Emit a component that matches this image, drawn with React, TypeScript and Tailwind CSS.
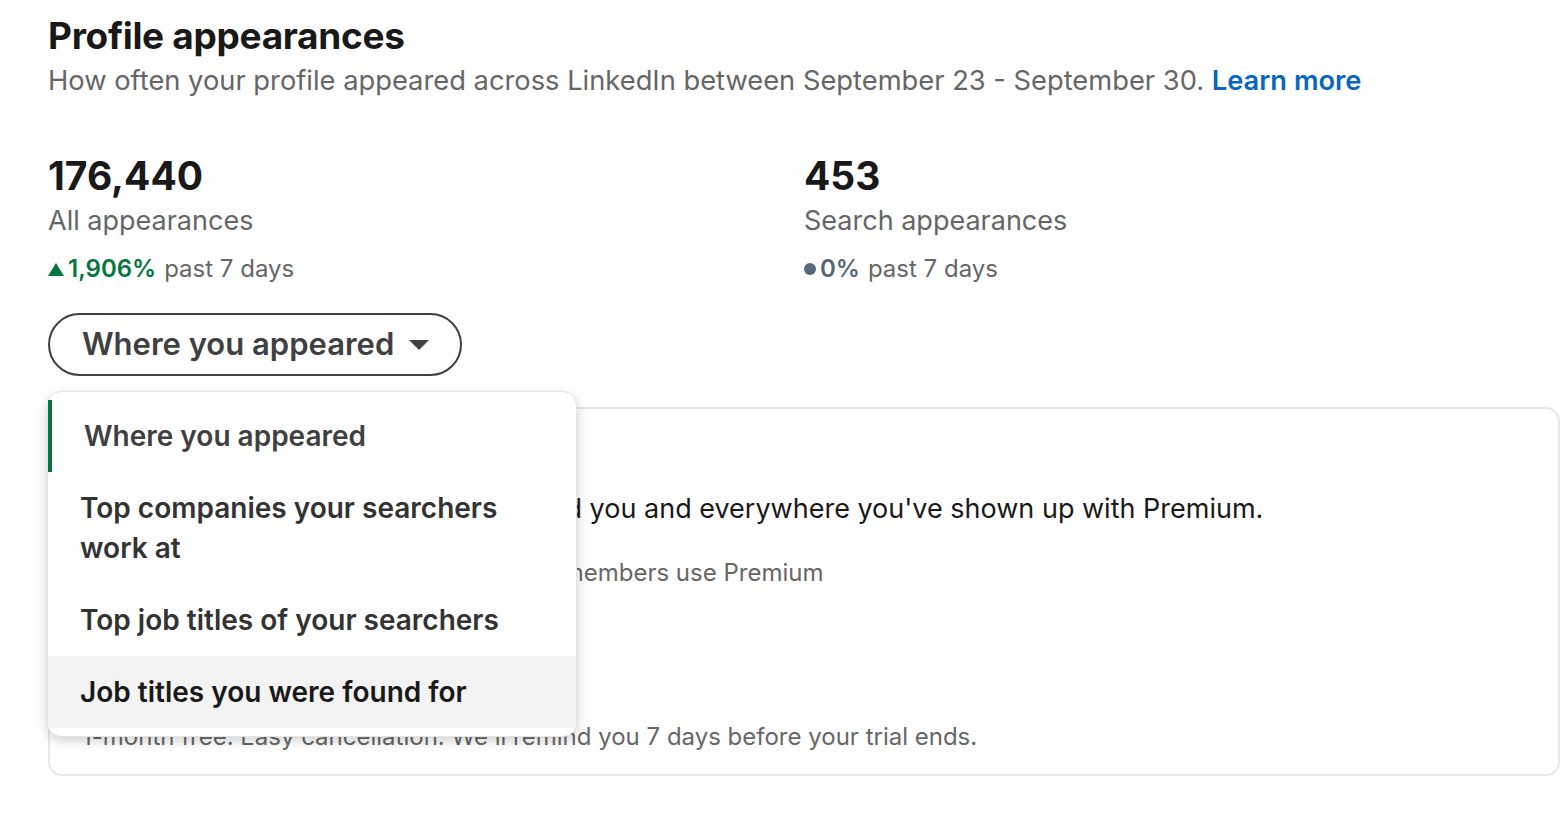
export default function App() {
  const font = { fontFamily: 'Inter, "Noto Sans", sans-serif' };
  return (
    <div className="min-h-[822px] w-[1560px] overflow-hidden bg-white" style={font}>
      <div className="pl-[48px] pt-[12px]">
        <h1 className="text-[37px] font-bold leading-[48px] tracking-[-0.3px] text-[#191919]">Profile appearances</h1>
        <p className="mt-[3px] text-[27.3px] leading-[36px] text-[#666666]">
          How often your profile appeared across LinkedIn between September 23 - September 30.{' '}
          <span className="font-semibold text-[#0a66c2]">Learn more</span>
        </p>

        <div className="mt-[53px] grid grid-cols-2">
          <div>
            <div className="text-[39px] font-bold leading-[48px] text-[#191919]">176,440</div>
            <div className="mt-[3px] text-[27px] leading-[36px] text-[#666666]">All appearances</div>
            <div className="mt-[15px] flex items-center text-[24px] leading-[30px] text-[#666666]">
              <span className="mr-[4px] inline-block h-0 w-0 border-x-[8px] border-b-[13px] border-x-transparent border-b-[#057642]" />
              <span className="font-semibold text-[#057642]">1,906%</span>
              <span className="ml-[8px]">past 7 days</span>
            </div>
          </div>
          <div>
            <div className="text-[39px] font-bold leading-[48px] text-[#191919]">453</div>
            <div className="mt-[3px] text-[27px] leading-[36px] text-[#666666]">Search appearances</div>
            <div className="mt-[15px] flex items-center text-[24px] leading-[30px] text-[#666666]">
              <span className="mr-[4px] inline-block h-[12px] w-[12px] rounded-full bg-[#56687a]" />
              <span className="font-semibold text-[#56687a]">0%</span>
              <span className="ml-[8px]">past 7 days</span>
            </div>
          </div>
        </div>

        <div className="relative mt-[29px]">
          <button className="flex h-[63px] items-center rounded-full border-2 border-[#404040] pl-[32px] pr-[30px] text-[31px] font-semibold text-[#404040]">
            Where you appeared
            <svg className="ml-[14px]" width="22" height="12" viewBox="0 0 22 12">
              <path d="M1 1 L21 1 L11 11 Z" fill="#404040" />
            </svg>
          </button>

          <div className="mt-[31px] h-[369px] w-[1512px] rounded-[14px] border-2 border-[#e8e8e8] pl-[32px] pt-[82px]">
            <p className="text-[27px] leading-[36px] text-[#191919]">
              See everyone who searched and found you and everywhere you&apos;ve shown up with Premium.
            </p>
            <p className="mt-[31px] text-[24px] leading-[30px] text-[#666666]">
              Rahul, Priya and millions of other LinkedIn members use Premium
            </p>
            <button className="mt-[34px] h-[48px] rounded-full bg-[#f8c77e] px-[24px] text-[22px] font-semibold text-[#191919]">
              Try Premium for $0
            </button>
            <p className="mt-[52px] text-[24px] leading-[30px] text-[#666666]">
              1-month free. Easy cancellation. We&apos;ll remind you 7 days before your trial ends.
            </p>
          </div>

          <div className="absolute left-[-1px] top-[78px] w-[530px] rounded-[14px] border border-[#e4e4e4] bg-white py-[8px] shadow-[0_4px_12px_rgba(0,0,0,0.18)]">
            <div className="flex h-[72px] items-center border-l-[4px] border-[#057642] pl-[32px] text-[28px] font-semibold text-[#404040]">
              Where you appeared
            </div>
            <div className="flex h-[112px] items-center pl-[32px] pr-[40px] text-[28px] font-semibold leading-[40px] text-[#333333]">
              Top companies your searchers work at
            </div>
            <div className="flex h-[72px] items-center pl-[32px] text-[28px] font-semibold text-[#333333]">
              Top job titles of your searchers
            </div>
            <div className="flex h-[72px] items-center bg-[#f3f3f3] pl-[32px] text-[28px] font-semibold text-[#191919]">
              Job titles you were found for
            </div>
          </div>
        </div>
      </div>
    </div>
  );
}
